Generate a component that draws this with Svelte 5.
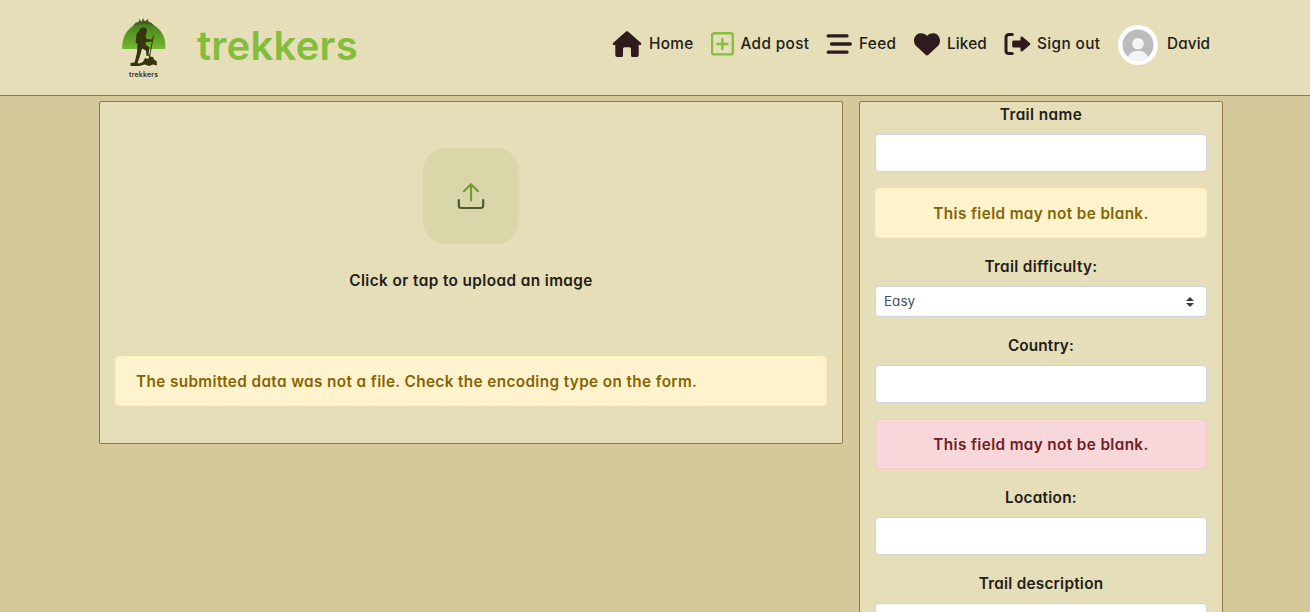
<script>
  let name = $state('');
  let country = $state('');
  let location = $state('');
  let description = $state('');
</script>

<header>
  <a class="brand" href="#home" aria-label="trekkers">
    <svg class="logo" width="50" height="64" viewBox="0 0 50 64">
      <defs>
        <linearGradient id="hill" x1="0" y1="0" x2="0" y2="1">
          <stop offset="0" stop-color="#477f1d" />
          <stop offset="1" stop-color="#75b82f" />
        </linearGradient>
      </defs>
      <path d="M3.200 33C2.500 22 8 13 16 8.500Q25 7 34 8.500C42 13 47.500 22 46.300 33Z" fill="url(#hill)" />
      <path d="M14 9.500L17 6.500L19.500 6L20.500 3L22 5.500L23 5L24 2L25.500 5L27 5L28.500 3L30 6L32 6.500L35 9.500Q25 7 14 9.500Z" fill="#42601f" />
      <g fill="#34350f">
        <path d="M20 15Q20.500 12 24 11.500Q28 11.500 28 14.500L27.500 17L26.500 18.500L27.500 23L33.500 23.500L33.500 25.500L27 26L26.500 28.500L30.500 31.500L29.500 38L31.500 39.500L27.500 40L27 34.500L23 32.500L21 40L18.500 47L20 49H15L18 36.500L18.500 28L16.500 26.500L17.500 18Z" />
        <path d="M11.500 47L15 46.500L20 47.500L24 46L26 42L29 43L31 40.500L34 41L35 43.500L37.500 45L38 49.500L34 48.500L30 50L26 48.500L20 50H11.500Z" />
      </g>
      <path d="M34.500 19.500L30 43" stroke="#34350f" stroke-width="1" fill="none" />
      <text x="24.500" y="61" text-anchor="middle" textLength="29">trekkers</text>
    </svg>
    <span class="title">trekkers</span>
  </a>
  <nav>
    <a href="#home">
      <svg class="w37" width="30" height="28" viewBox="0 0 30 28">
        <path d="M14 1.400Q15 .6 16 1.400L29 13Q30 14.700 28.500 15H26.700V25Q26.700 27 24.700 27H20.500Q19 27 19 25.500V19Q19 17.300 17.300 17.300H12.700Q11 17.300 11 19V25.500Q11 27 9.500 27H5.300Q3.300 27 3.300 25V15H1.500Q0 14.700 1 13Z" fill="#2f1b1d" />
      </svg><span class="t-home">Home</span>
    </a>
    <a href="#add">
      <svg class="w30" width="24" height="24" viewBox="0 0 24 24" fill="none" stroke="#86bf3e" stroke-width="2.400" stroke-linecap="round">
        <rect x="1" y="1.200" width="20.800" height="21.200" rx="2" /><path d="M6.400 12H16.400M11.400 7V17" />
      </svg><span class="t-add">Add post</span>
    </a>
    <a href="#feed">
      <svg class="w33" width="27" height="24" viewBox="0 0 27 24" stroke="#2f1b1d" stroke-width="3.300" stroke-linecap="round">
        <path d="M2.200 3.900H21M5.500 12H24.300M2.200 20.200H21" />
      </svg><span class="t-feed">Feed</span>
    </a>
    <a href="#liked">
      <svg class="w33" width="26" height="26" viewBox="0 0 512 512">
        <path d="M47.600 300.400L228.300 469.100c7.500 7 17.400 10.900 27.700 10.900s20.200-3.900 27.700-10.900L464.400 300.400c30.400-28.300 47.600-68 47.600-109.500v-5.800c0-69.900-50.500-129.500-119.400-141C347 36.500 300.600 51.400 268 84L256 96 244 84c-32.600-32.600-79-47.500-124.600-39.900C50.500 55.600 0 115.200 0 185.100v5.800c0 41.500 17.200 81.200 47.600 109.500z" fill="#2f1b1d" />
      </svg><span class="t-liked">Liked</span>
    </a>
    <a href="#out">
      <svg class="w33" width="27" height="24" viewBox="0 0 27 24">
        <path d="M8.300 2.400H5Q2 2.400 2 5.400V18.600Q2 21.600 5 21.600H8.300" fill="none" stroke="#2f1b1d" stroke-width="3" stroke-linecap="round" />
        <path d="M9.500 8.500H16.500V5.500Q17 3.700 18.500 4.800L25.800 11Q26.800 12 25.800 13L18.500 19.200Q17 20.300 16.500 18.500V15.500H9.500Q8.200 15.500 8.200 14V10Q8.200 8.500 9.500 8.500Z" fill="#2f1b1d" />
      </svg><span class="t-out">Sign out</span>
    </a>
    <a href="#profile">
      <svg class="w49" width="40" height="40" viewBox="0 0 40 40">
        <defs><clipPath id="face"><circle cx="20" cy="20" r="15.500" /></clipPath></defs>
        <circle cx="20" cy="20" r="20" fill="#fff" />
        <g clip-path="url(#face)">
          <rect width="40" height="40" fill="#bcbcbd" />
          <circle cx="20" cy="18.700" r="6" fill="#f3f4f5" />
          <path d="M9 38C9 29 14 25.800 20 25.800S31 29 31 38Z" fill="#f3f4f5" />
          <circle cx="20" cy="18.700" r="6.300" fill="none" stroke="#bcbcbd" stroke-width=".7" />
        </g>
      </svg><span class="t-david">David</span>
    </a>
  </nav>
</header>

<main>
  <section class="card upload">
    <div class="drop">
      <svg width="32" height="32" viewBox="0 0 32 32" fill="none" stroke-width="2.200" stroke-linecap="round" stroke-linejoin="round">
        <path d="M16 20.500V4.500M9 11.200L16 4.200L23 11.200" stroke="#729a35" />
        <path d="M3.800 20V25.500Q3.800 28 6.300 28H25.700Q28.200 28 28.200 25.500V20" stroke="#4f5a2c" />
      </svg>
    </div>
    <p><span class="t-click">Click or tap to upload an image</span></p>
    <div class="alert warning"><span class="t-file">The submitted data was not a file. Check the encoding type on the form.</span></div>
  </section>

  <form class="card">
    <label for="name"><span class="t-name">Trail name</span></label>
    <input id="name" bind:value={name} />
    <div class="alert warning"><span class="t-blank">This field may not be blank.</span></div>
    <label for="difficulty"><span class="t-diff">Trail difficulty:</span></label>
    <button type="button" id="difficulty" class="select">
      <span class="t-easy">Easy</span>
      <svg width="8" height="10" viewBox="0 0 4 5"><path d="M2 0L0 2h4zm0 5L0 3h4z" fill="#343a40" /></svg>
    </button>
    <label for="country"><span class="t-country">Country:</span></label>
    <input id="country" bind:value={country} />
    <div class="alert danger"><span class="t-blank">This field may not be blank.</span></div>
    <label for="location"><span class="t-loc">Location:</span></label>
    <input id="location" bind:value={location} />
    <label for="description"><span class="t-desc">Trail description</span></label>
    <textarea id="description" rows="6" bind:value={description}></textarea>
  </form>
</main>

<style>
  :global(html) { overflow: hidden; }
  :global(body) { background: #d4c799; }
  :global(#app) { height: 612px; overflow: hidden; }
  header, main {
    font: 560 15.3px/24px Inter, sans-serif;
    font-feature-settings: "cv11", "ss03";
    color: #212018;
    box-sizing: border-box;
  }
  header {
    height: 96px;
    padding: 0 99px 0 119px;
    display: flex;
    justify-content: space-between;
    background: #e6deb8;
    border-bottom: 1px solid #947846;
  }
  a { color: inherit; text-decoration: none; }
  .brand { display: flex; align-items: flex-start; }
  .logo { margin-top: 16px; width: 50px; }
  .logo text { font: 600 7px Inter, sans-serif; fill: #3a2f28; }
  .title {
    margin: 16px 0 0 28px;
    font-size: 40px;
    line-height: 60px;
    font-weight: 600;
    letter-spacing: .25px;
    color: #83bd3c;
    white-space: nowrap;
  }
  nav {
    display: grid;
    grid-template-columns: 99px 115px 88px 90px 114px 93px;
    height: 88px;
    font-weight: 500;
  }
  nav a { display: flex; align-items: center; white-space: nowrap; }
  nav svg { flex: none; }
  .w37 { margin-right: 7px; }
  .w30 { margin: 0 5.500px 0 0; }
  .w33 { margin-right: 6px; }
  .w33[width="26"] { margin-right: 7px; }
  .w49 { margin-right: 9px; position: relative; top: 1px; }
  .t-home, .t-feed { letter-spacing: .35px; }
  .t-add { letter-spacing: .38px; }
  .t-liked { letter-spacing: .15px; }
  .t-out { letter-spacing: .4px; }
  .t-david { letter-spacing: .12px; }
  main {
    display: grid;
    grid-template-columns: 744px 364px;
    column-gap: 16px;
    align-items: start;
    padding: 5px 0 0 99px;
  }
  .card {
    box-sizing: border-box;
    background: #e6deb8;
    border: 1px solid #947846;
    border-radius: 2px;
    padding: 0 15px 8px;
    text-align: center;
  }
  .upload { height: 343px; padding-top: 46px; }
  .drop {
    display: flex;
    align-items: center;
    justify-content: center;
    width: 96px;
    height: 96px;
    margin: 0 auto;
    border-radius: 23px;
    background: #d9d6aa;
  }
  p { margin: 25px 0 63px; }
  .t-click { letter-spacing: .42px; }
  .t-file { letter-spacing: .385px; }
  .t-name { letter-spacing: .42px; }
  .t-blank { letter-spacing: .38px; }
  .t-diff { letter-spacing: .33px; }
  .t-country { letter-spacing: .15px; }
  .t-loc { letter-spacing: .28px; }
  .t-desc { letter-spacing: .27px; }
  .alert {
    box-sizing: border-box;
    height: 50px;
    padding: 13px 20px 11px;
    margin: 16px 0;
    border: 1px solid;
    border-radius: 4px;
    white-space: nowrap;
  }
  .upload .alert { text-align: left; }
  .warning { background: #fff3cd; border-color: #ffeeba; color: #856404; }
  .danger { background: #f8d7da; border-color: #f5c6cb; color: #721c24; }
  label {
    display: block;
    box-sizing: border-box;
    height: 24px;
    padding-top: 1px;
    margin-bottom: 8px;
  }
  input, textarea, .select {
    display: block;
    box-sizing: border-box;
    width: 100%;
    height: 38px;
    margin: 0 0 16px;
    border: 1px solid #ced4da;
    border-radius: 4px;
    background: #fff;
    outline: none;
  }
  textarea { height: 158px; resize: none; }
  .select {
    height: 31px;
    display: flex;
    align-items: center;
    justify-content: space-between;
    padding: 0 12px 0 8px;
    font: 400 13.500px Inter, sans-serif;
    font-feature-settings: "cv11";
    color: #495057;
  }
  .t-easy { padding-bottom: 1px; }
</style>
